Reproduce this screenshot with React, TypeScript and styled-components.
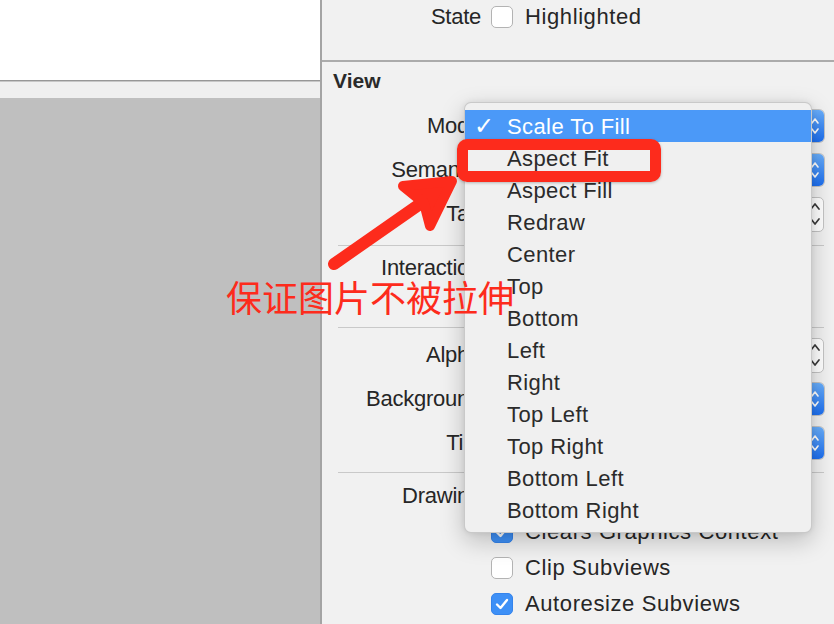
import React from 'react';
import styled, { createGlobalStyle } from 'styled-components';

const Global = createGlobalStyle`
  html, body { margin: 0; padding: 0; }
  body {
    width: 834px;
    height: 624px;
    overflow: hidden;
    background: #f1f1f1;
    font-family: "Liberation Sans", Arial, sans-serif;
    color: #262626;
  }
`;

const Screen = styled.div`
  position: relative;
  width: 834px;
  height: 624px;
  display: flex;
  overflow: hidden;
`;

/* ---------- left canvas ---------- */
const Canvas = styled.div`
  width: 320px;
  flex-shrink: 0;
  display: flex;
  flex-direction: column;
  background: #bfbfbf;
`;
const CanvasTop = styled.div`
  height: 80px;
  background: #ffffff;
`;
const CanvasEdge = styled.div`
  height: 18px;
  background: linear-gradient(#969696 0 1px, #c6c6c6 1px 2px, #efefef 2px);
`;
const Divider = styled.div`
  width: 2px;
  flex-shrink: 0;
  background: #a4a4a4;
`;

/* ---------- inspector ---------- */
const Inspector = styled.div`
  flex: 1;
  display: flex;
  flex-direction: column;
  background: #f1f1f1;
`;
const StateSection = styled.div`
  height: 62px;
  padding-top: 4px;
  box-sizing: border-box;
  border-bottom: 2px solid #ababab;
`;
const SectionTitle = styled.div`
  height: 38px;
  line-height: 38px;
  padding-left: 11px;
  font-size: 21px;
  font-weight: bold;
  color: #2a2a2a;
`;
const Row = styled.div<{ $h: number; $mt?: number }>`
  display: grid;
  grid-template-columns: 159px 1fr;
  column-gap: 10px;
  align-items: center;
  height: ${p => p.$h}px;
  margin-top: ${p => p.$mt ?? 0}px;
  padding-right: 10px;
`;
const Label = styled.div`
  text-align: right;
  font-size: 22px;
  letter-spacing: -0.25px;
  white-space: nowrap;
`;
const Separator = styled.div<{ $mt: number }>`
  height: 1px;
  margin: ${p => p.$mt}px 10px 0 16px;
  background: #c9c9c9;
`;
const Controls = styled.div`
  display: flex;
  align-items: center;
  gap: 18px;
`;
const Check = styled.label`
  display: flex;
  align-items: center;
  gap: 12px;
  font-size: 22px;
  letter-spacing: 0.6px;
  white-space: nowrap;
`;
const Box = styled.span<{ $on?: boolean }>`
  width: 22px;
  height: 22px;
  box-sizing: border-box;
  border-radius: 5px;
  display: flex;
  align-items: center;
  justify-content: center;
  background: ${p => (p.$on ? '#3e90f6' : '#ffffff')};
  border: 1px solid ${p => (p.$on ? '#3584ec' : '#b3b3b3')};
  flex-shrink: 0;
`;
const Popup = styled.div`
  height: 32px;
  display: flex;
  align-items: stretch;
  border-radius: 5px;
  background: #ffffff;
  box-shadow: 0 0 0 1px #c4c4c4;
  overflow: hidden;
  font-size: 20px;
`;
const PopupText = styled.div`
  flex: 1;
  padding-left: 10px;
  display: flex;
  align-items: center;
`;
const PopupArrow = styled.div`
  width: 18px;
  display: flex;
  align-items: center;
  justify-content: center;
  background: linear-gradient(#68adfa, #1d6ff0);
`;
const FieldGroup = styled.div`
  display: flex;
  align-items: center;
  gap: 6px;
`;
const Field = styled.div`
  flex: 1;
  height: 30px;
  box-sizing: border-box;
  border: 1px solid #c2c2c2;
  background: #fff;
  font-size: 20px;
  padding-left: 6px;
  display: flex;
  align-items: center;
`;
const Stepper = styled.div`
  width: 18px;
  height: 35px;
  box-sizing: border-box;
  border: 1px solid #c4c4c4;
  border-radius: 5px;
  background: #fff;
  display: flex;
  align-items: center;
  justify-content: center;
`;

/* ---------- overlays ---------- */
const Menu = styled.div`
  position: absolute;
  left: 464px;
  top: 102px;
  width: 348px;
  height: 431px;
  box-sizing: border-box;
  padding: 7px 0;
  background: #f0f0f0;
  border: 1px solid rgba(0, 0, 0, 0.16);
  border-radius: 7px;
  box-shadow: 0 8px 24px rgba(0, 0, 0, 0.22), 0 0 6px rgba(0, 0, 0, 0.08);
  z-index: 2;
`;
const MenuItem = styled.div<{ $active?: boolean }>`
  position: relative;
  height: 32px;
  line-height: 33px;
  padding-left: 42px;
  font-size: 22px;
  letter-spacing: 0.4px;
  color: ${p => (p.$active ? '#ffffff' : '#2b2b2b')};
  background: ${p => (p.$active ? '#4b99f8' : 'transparent')};
`;
const CheckMark = styled.span`
  position: absolute;
  left: 9px;
  top: 0;
  font-family: "DejaVu Sans", sans-serif;
  font-size: 24px;
  font-weight: bold;
  letter-spacing: 0;
`;
const Highlight = styled.div`
  position: absolute;
  left: 457px;
  top: 139px;
  width: 204px;
  height: 43px;
  box-sizing: border-box;
  border: 11px solid #fd2b1c;
  border-radius: 10px;
  box-shadow: 0 1px 3px rgba(0, 0, 0, 0.25);
  z-index: 3;
`;
const ArrowSvg = styled.svg`
  position: absolute;
  left: 320px;
  top: 165px;
  z-index: 3;
  overflow: visible;
`;
const Caption = styled.div`
  position: absolute;
  left: 226px;
  top: 276px;
  font-family: "Noto Sans CJK SC", sans-serif;
  font-size: 36px;
  line-height: 40px;
  color: #fd2b1c;
  white-space: nowrap;
  z-index: 3;
`;

const Tick = ({ color = '#fff' }: { color?: string }) => (
  <svg width="14" height="12" viewBox="0 0 14 12">
    <path d="M2 6.5 L5.5 10 L12 2" fill="none" stroke={color} strokeWidth="2.4" strokeLinecap="round" strokeLinejoin="round" />
  </svg>
);

const Chevrons = ({ color, size }: { color: string; size: 'sm' | 'lg' }) =>
  size === 'sm' ? (
    <svg width="10" height="22" viewBox="0 0 10 22">
      <path d="M2 8 L5 4 L8 8 M2 14 L5 18 L8 14" fill="none" stroke={color} strokeWidth="1.6" strokeLinecap="round" strokeLinejoin="round" />
    </svg>
  ) : (
    <svg width="12" height="30" viewBox="0 0 12 30">
      <path d="M2 10 L6 5 L10 10 M2 20 L6 25 L10 20" fill="none" stroke={color} strokeWidth="1.7" strokeLinecap="round" strokeLinejoin="round" />
    </svg>
  );

const CheckItem = ({ on, children }: { on?: boolean; children: React.ReactNode }) => (
  <Check>
    <Box $on={on}>{on && <Tick />}</Box>
    {children}
  </Check>
);

const PopupControl = ({ value }: { value: string }) => (
  <Popup>
    <PopupText>{value}</PopupText>
    <PopupArrow>
      <Chevrons color="#ffffff" size="sm" />
    </PopupArrow>
  </Popup>
);

const StepField = ({ value }: { value: string }) => (
  <FieldGroup>
    <Field>{value}</Field>
    <Stepper>
      <Chevrons color="#3a3a3a" size="lg" />
    </Stepper>
  </FieldGroup>
);

const modes = [
  'Scale To Fill',
  'Aspect Fit',
  'Aspect Fill',
  'Redraw',
  'Center',
  'Top',
  'Bottom',
  'Left',
  'Right',
  'Top Left',
  'Top Right',
  'Bottom Left',
  'Bottom Right',
];

export default function App() {
  return (
    <>
      <Global />
      <Screen>
        <Canvas>
          <CanvasTop />
          <CanvasEdge />
        </Canvas>
        <Divider />
        <Inspector>
          <StateSection>
            <Row $h={24}>
              <Label>State</Label>
              <CheckItem>Highlighted</CheckItem>
            </Row>
          </StateSection>
          <SectionTitle>View</SectionTitle>
          <Row $h={44} $mt={4}>
            <Label>Mode</Label>
            <PopupControl value="Scale To Fill" />
          </Row>
          <Row $h={44}>
            <Label>Semantic</Label>
            <PopupControl value="Unspecified" />
          </Row>
          <Row $h={44}>
            <Label>Tag</Label>
            <StepField value="0" />
          </Row>
          <Separator $mt={9} />
          <Row $h={36} $mt={4}>
            <Label>Interaction</Label>
            <CheckItem on>User Interaction Enabled</CheckItem>
          </Row>
          <Row $h={36}>
            <Label />
            <CheckItem>Multiple Touch</CheckItem>
          </Row>
          <Separator $mt={5} />
          <Row $h={44} $mt={5}>
            <Label>Alpha</Label>
            <StepField value="1" />
          </Row>
          <Row $h={44}>
            <Label>Background</Label>
            <PopupControl value="Default" />
          </Row>
          <Row $h={44}>
            <Label>Tint</Label>
            <PopupControl value="Default" />
          </Row>
          <Separator $mt={7} />
          <Row $h={36} $mt={5}>
            <Label>Drawing</Label>
            <Controls>
              <CheckItem on>Opaque</CheckItem>
              <CheckItem>Hidden</CheckItem>
            </Controls>
          </Row>
          <Row $h={36}>
            <Label />
            <CheckItem on>Clears Graphics Context</CheckItem>
          </Row>
          <Row $h={36}>
            <Label />
            <CheckItem>Clip Subviews</CheckItem>
          </Row>
          <Row $h={36}>
            <Label />
            <CheckItem on>Autoresize Subviews</CheckItem>
          </Row>
        </Inspector>

        <Menu>
          {modes.map((m, i) => (
            <MenuItem key={m} $active={i === 0}>
              {i === 0 && <CheckMark>✓</CheckMark>}
              {m}
            </MenuItem>
          ))}
        </Menu>

        <Highlight />

        <ArrowSvg width="150" height="110" viewBox="320 165 150 110">
          <g fill="#fd2b1c" stroke="#fd2b1c" strokeLinecap="round" strokeLinejoin="round">
            <line x1="334" y1="264" x2="440" y2="190" strokeWidth="12" />
            <polygon points="452,181 403,186 424,203 430,226" strokeWidth="10" />
          </g>
        </ArrowSvg>

        <Caption>保证图片不被拉伸</Caption>
      </Screen>
    </>
  );
}
